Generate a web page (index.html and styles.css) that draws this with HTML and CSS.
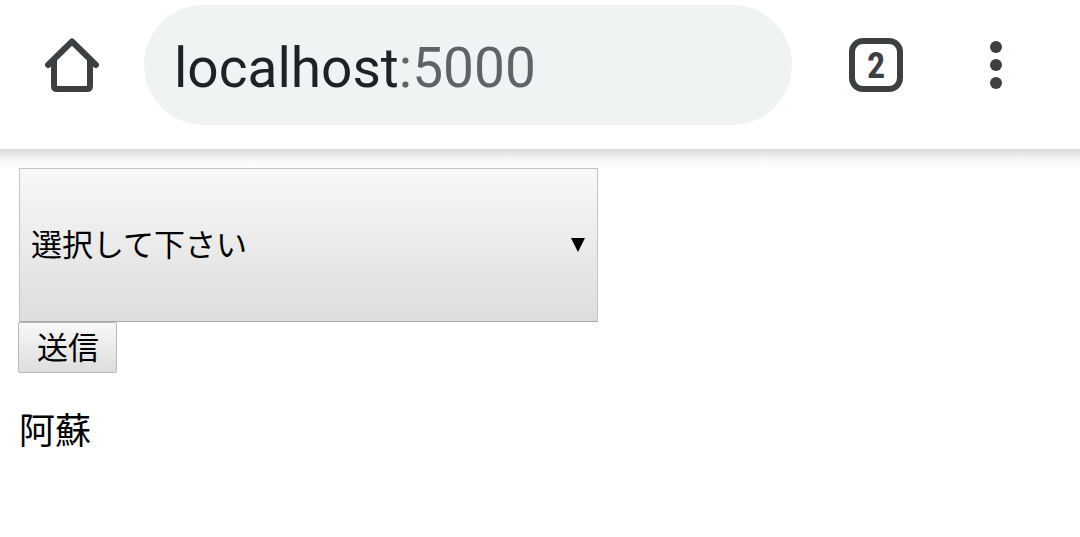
FILE: index.html
```html
<!DOCTYPE html>
<html lang="ja">
<head>
<meta charset="utf-8">
<meta name="viewport" content="width=device-width, initial-scale=1">
<title>localhost:5000</title>
<link rel="stylesheet" href="styles.css">
</head>
<body>
<header class="toolbar">
  <button class="icon-button" type="button" aria-label="Home">
    <svg class="icon" viewBox="0 0 54 54" aria-hidden="true">
      <path d="M3 27 27 3.500 51 27M9 22V48Q9 51 12 51H42Q45 51 45 48V22" fill="none" stroke="currentColor" stroke-width="6" stroke-linecap="round" stroke-linejoin="round"/>
    </svg>
  </button>
  <div class="address">
    <input class="address-input" type="text" value="localhost:5000" aria-label="Address" spellcheck="false">
  </div>
  <button class="icon-button tabs" type="button" aria-label="Tabs">2</button>
  <button class="icon-button menu" type="button" aria-label="Menu">
    <svg class="icon" viewBox="0 0 54 54" aria-hidden="true">
      <g fill="currentColor"><circle cx="27" cy="9" r="6"/><circle cx="27" cy="27" r="6"/><circle cx="27" cy="45" r="6"/></g>
    </svg>
  </button>
</header>
<main class="page">
  <form class="form">
    <div class="picker">
      <select class="select" aria-label="選択"><option>選択して下さい</option></select>
      <svg class="arrow" viewBox="0 0 14 14" aria-hidden="true"><path d="M0 0H14L7 14Z"/></svg>
    </div>
    <button class="submit" type="button">送信</button>
  </form>
  <p class="result">阿蘇</p>
</main>
</body>
</html>
```
FILE: styles.css
```css
* { box-sizing: border-box; }

body {
  margin: 0;
  background: #fff;
  color: #000;
  font-family: "Noto Sans CJK JP", sans-serif;
}

.toolbar {
  display: flex;
  align-items: center;
  padding: 5px 57px 24px 45px;
  background: #fff;
}

.icon-button {
  flex: none;
  width: 54px;
  height: 54px;
  padding: 0;
  border: 0;
  background: none;
  color: #3c4043;
}

.icon { display: block; width: 54px; height: 54px; }

.address {
  flex: 1;
  min-width: 0;
  margin: 0 57px 0 45px;
  padding: 0 30px;
  border-radius: 60px;
  background: #f0f3f4;
}

.address-input {
  display: block;
  width: 100%;
  height: 120px;
  padding: 6px 0 0;
  border: 0;
  outline: 0;
  background: linear-gradient(90deg, #202124 224px, #5f6368 224px);
  background-clip: text;
  -webkit-background-clip: text;
  -webkit-text-fill-color: transparent;
  color: #202124;
  font: 55px Roboto, sans-serif;
}

.tabs {
  padding-top: 2px;
  border: 6px solid #3c4043;
  border-radius: 14px;
  font: bold 36px/40px "Roboto Condensed", Roboto, sans-serif;
}

.menu { margin-left: 66px; }

.page {
  padding: 19px 18px;
  background: linear-gradient(#d8d8d8, #e9e9e9 5px, #f8f8f8 12px, #fff 20px);
}

.form {
  display: flex;
  flex-direction: column;
  align-items: flex-start;
}

.picker {
  position: relative;
  width: 580px;
  max-width: 100%;
  padding-left: 1px;
}

.select {
  display: block;
  width: 100%;
  height: 154px;
  padding: 0 40px 5px 11px;
  appearance: none;
  border: 1px solid #c4c4c4;
  border-bottom-color: #a8a8a8;
  border-radius: 0;
  background: linear-gradient(#f8f8f8, #ddd);
  color: #000;
  font: 31px "Noto Sans CJK JP", sans-serif;
}

.arrow {
  position: absolute;
  top: 70px;
  right: 13px;
  width: 14px;
  height: 14px;
  pointer-events: none;
}

.submit {
  height: 51px;
  padding: 0 17px 4px 18px;
  border: 1px solid #b8b8b8;
  border-radius: 2px;
  background: linear-gradient(#f8f8f8, #ddd);
  color: #000;
  font: 31px/44px "Noto Sans CJK JP", sans-serif;
}

.result {
  margin: 28px 0 0 1px;
  font-size: 36px;
  line-height: 54px;
}
```
